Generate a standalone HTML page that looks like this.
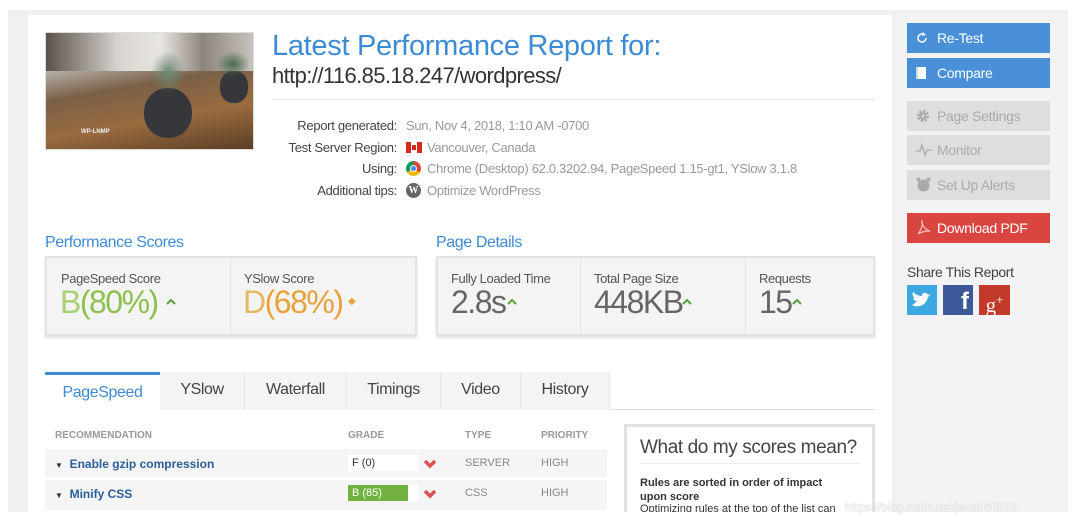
<!DOCTYPE html>
<html><head><meta charset="utf-8"><style>
*{margin:0;padding:0;box-sizing:border-box}
body{width:1080px;height:524px;background:#fff;font-family:"Liberation Sans",sans-serif;position:relative;overflow:hidden;color:#444}
.a{position:absolute;white-space:nowrap}
.frame{left:8px;top:10px;width:1060px;height:504px;background:#f0f0f0}
.main{left:28px;top:15px;width:864px;height:498px;background:#fff}
.side{left:896px;top:15px;width:172px;height:498px;background:#f3f3f3}
.btn{position:absolute;left:907px;width:143px;height:30px;color:#fff;font-size:14px;line-height:30px;padding-left:30px;letter-spacing:-.3px}
.blue{background:#4a90d9}
.grey{background:#dedede;color:#aaa}
.red{background:#d9463f}
.ic{position:absolute;left:9px;top:8px}
.lbl{font-size:13px;color:#444;text-align:right;width:120px;left:277px;letter-spacing:-.3px}
.val{font-size:13px;color:#999;left:427px;letter-spacing:-.3px}
.sec{font-size:16px;color:#3d8bd5;letter-spacing:-.4px}
.box{background:#f4f4f4;border:2px solid #e2e2e2;box-shadow:0 2px 3px rgba(0,0,0,.12)}
.cl{font-size:13px;color:#555;letter-spacing:-.4px}
.big{font-size:32px;letter-spacing:-1.5px;top:284px;font-weight:300;-webkit-text-stroke:0}
.tab{top:372px;height:38px;font-size:16px;color:#444;line-height:36px;text-align:center;background:#f4f4f4;border-right:1px solid #e6e6e6;letter-spacing:-.4px}
.th{font-size:10px;color:#999;font-weight:bold;top:430px}
.row{left:45px;width:562px;height:28px;background:#f5f5f5}
.rl{font-size:12px;font-weight:bold;color:#2a5f9a}
.cell{font-size:11px;color:#888}
</style></head><body>
<div class="a frame"></div>
<div class="a main"></div>
<div class="a side"></div>
<div class="a" style="left:45px;top:32px;width:209px;height:118px;border:1px solid #ddd;background:linear-gradient(170deg,#7d766f 0%,#b6b0a8 25%,#7a6048 45%,#9a6b3f 70%,#5a3e25 100%);overflow:hidden">
<div class="a" style="left:0;top:0;width:209px;height:38px;background:linear-gradient(90deg,#5a524a,#d8d5d0 35%,#e8e6e2 55%,#8c857c 75%,#c9c6c0)"></div>
<div class="a" style="left:98px;top:55px;width:48px;height:50px;border-radius:48%;background:#35373b"></div>
<div class="a" style="left:104px;top:18px;width:36px;height:42px;background:radial-gradient(#6d8a74,transparent 70%)"></div>
<div class="a" style="left:174px;top:38px;width:28px;height:32px;border-radius:45%;background:#35373b"></div>
<div class="a" style="left:170px;top:18px;width:34px;height:26px;background:radial-gradient(#4a6a50,transparent 70%)"></div>
<div class="a" style="left:35px;top:96px;font-size:6px;color:#eee;font-weight:bold">WP-LNMP</div>
</div>
<div class="a" style="left:272px;top:30px;font-size:29px;color:#3d8bd5;letter-spacing:-.3px">Latest Performance Report for:</div>
<div class="a" style="left:272px;top:63px;font-size:22px;color:#333;letter-spacing:-.6px">http://116.85.18.247/wordpress/</div>
<div class="a" style="left:272px;top:99px;width:603px;height:1px;background:#e6e6e6"></div>
<div class="a lbl" style="top:118px">Report generated:</div><div class="a val" style="left:406px;top:118px">Sun, Nov 4, 2018, 1:10 AM -0700</div>
<div class="a lbl" style="top:140px">Test Server Region:</div>
<div class="a" style="left:406px;top:142px;width:16px;height:11px;background:linear-gradient(90deg,#d52b1e 30%,#fff 30%,#fff 70%,#d52b1e 70%)"><div class="a" style="left:6px;top:3px;width:4px;height:5px;background:#d52b1e"></div></div>
<div class="a val" style="top:140px">Vancouver, Canada</div>
<div class="a lbl" style="top:161px">Using:</div>
<div class="a" style="left:406px;top:161px;width:15px;height:15px;border-radius:50%;background:conic-gradient(#db4437 0 120deg,#f4b400 120deg 240deg,#0f9d58 240deg)"><div class="a" style="left:4px;top:4px;width:7px;height:7px;border-radius:50%;background:#4285f4;border:1px solid #fff"></div></div>
<div class="a val" style="top:161px">Chrome (Desktop) 62.0.3202.94, PageSpeed 1.15-gt1, YSlow 3.1.8</div>
<div class="a lbl" style="top:183px">Additional tips:</div>
<div class="a" style="left:406px;top:183px;width:15px;height:15px;border-radius:50%;background:#666;color:#fff;font-size:10px;font-weight:bold;text-align:center;line-height:15px;font-family:'Liberation Serif',serif">W</div>
<div class="a val" style="top:183px">Optimize WordPress</div>

<div class="a sec" style="left:45px;top:234px">Performance Scores</div>
<div class="a sec" style="left:436px;top:234px">Page Details</div>
<div class="a box" style="left:45px;top:256px;width:372px;height:80px"></div>
<div class="a" style="left:230px;top:258px;width:1px;height:76px;background:#e2e2e2"></div>
<div class="a box" style="left:436px;top:256px;width:439px;height:80px"></div>
<div class="a" style="left:580px;top:258px;width:1px;height:76px;background:#e2e2e2"></div>
<div class="a" style="left:745px;top:258px;width:1px;height:76px;background:#e2e2e2"></div>
<div class="a cl" style="left:61px;top:271px">PageSpeed Score</div>
<div class="a big" style="left:60px;color:#8cc04f"><span style="color:#a6d074">B</span>(80%)</div>
<svg class="a" style="left:166px;top:298px" width="10" height="8"><path d="M1 6L5 2L9 6" stroke="#5aa03c" stroke-width="2" fill="none"/></svg>
<div class="a cl" style="left:244px;top:271px">YSlow Score</div>
<div class="a big" style="left:243px;color:#e9a23b"><span style="color:#e4b860">D</span>(68%)</div>
<div class="a" style="left:348px;top:296px;color:#e9a23b;font-size:10px">◆</div>
<div class="a cl" style="left:451px;top:271px">Fully Loaded Time</div>
<div class="a big" style="left:451px;color:#666">2.8s</div>
<svg class="a" style="left:507px;top:298px" width="10" height="8"><path d="M1 6L5 2L9 6" stroke="#5aa03c" stroke-width="2" fill="none"/></svg>
<div class="a cl" style="left:594px;top:271px">Total Page Size</div>
<div class="a big" style="left:594px;color:#666">448KB</div>
<svg class="a" style="left:682px;top:298px" width="10" height="8"><path d="M1 6L5 2L9 6" stroke="#5aa03c" stroke-width="2" fill="none"/></svg>
<div class="a cl" style="left:759px;top:271px">Requests</div>
<div class="a big" style="left:759px;color:#666">15</div>
<svg class="a" style="left:792px;top:298px" width="10" height="8"><path d="M1 6L5 2L9 6" stroke="#5aa03c" stroke-width="2" fill="none"/></svg>

<div class="a" style="left:45px;top:409px;width:830px;height:1px;background:#e2e2e2"></div>
<div class="a tab" style="left:45px;width:115px;background:#fff;color:#3d8bd5;border-top:3px solid #3d8bd5;border-right:none">PageSpeed</div>
<div class="a tab" style="left:160px;width:85px">YSlow</div>
<div class="a tab" style="left:245px;width:102px">Waterfall</div>
<div class="a tab" style="left:347px;width:94px">Timings</div>
<div class="a tab" style="left:441px;width:80px">Video</div>
<div class="a tab" style="left:521px;width:89px">History</div>

<div class="a th" style="left:55px">RECOMMENDATION</div>
<div class="a th" style="left:348px">GRADE</div>
<div class="a th" style="left:465px">TYPE</div>
<div class="a th" style="left:541px">PRIORITY</div>
<div class="a row" style="top:449px"></div>
<div class="a row" style="top:480px;height:30px"></div>
<div class="a rl" style="left:55px;top:457px"><span style="font-size:8px;color:#333">▼</span>&nbsp; Enable gzip compression</div>
<div class="a" style="left:348px;top:455px;width:70px;height:16px;background:#fff"></div>
<div class="a cell" style="left:352px;top:457px;color:#333">F (0)</div>
<svg class="a" style="left:423px;top:459px" width="14" height="10"><path d="M2 2L7 7L12 2" stroke="#d9534f" stroke-width="3.5" fill="none"/></svg>
<div class="a cell" style="left:465px;top:457px">SERVER</div><div class="a cell" style="left:541px;top:457px">HIGH</div>
<div class="a rl" style="left:55px;top:487px"><span style="font-size:8px;color:#333">▼</span>&nbsp; Minify CSS</div>
<div class="a" style="left:348px;top:485px;width:70px;height:16px;background:#fff"></div>
<div class="a" style="left:348px;top:485px;width:60px;height:16px;background:#72b240"></div>
<div class="a cell" style="left:352px;top:487px;color:#fff">B (85)</div>
<svg class="a" style="left:423px;top:489px" width="14" height="10"><path d="M2 2L7 7L12 2" stroke="#d9534f" stroke-width="3.5" fill="none"/></svg>
<div class="a cell" style="left:465px;top:487px">CSS</div><div class="a cell" style="left:541px;top:487px">HIGH</div>

<div class="a" style="left:624px;top:424px;width:251px;height:100px;border:3px solid #e2e2e2;background:#fff"></div>
<div class="a" style="left:640px;top:437px;font-size:19px;color:#444;letter-spacing:-.4px">What do my scores mean?</div>
<div class="a" style="left:640px;top:463px;width:220px;height:1px;background:#eee"></div>
<div class="a" style="left:640px;top:476px;font-size:11px;font-weight:bold;color:#333;line-height:14px;white-space:normal;width:210px">Rules are sorted in order of impact upon score</div>
<div class="a" style="left:640px;top:503px;font-size:11px;color:#333">Optimizing rules at the top of the list can</div>
<div class="a" style="left:0;top:512px;width:1080px;height:12px;background:#fff"></div>
<div class="a" style="left:845px;top:500px;font-size:12px;color:#fff;text-shadow:0 0 1px #999">https://blog.csdn.net/java060515</div>

<div class="btn blue" style="top:23px"><svg class="ic" style="top:9px" width="12" height="12"><path d="M10 6A4 4 0 1 1 8 2.5" stroke="#fff" stroke-width="1.5" fill="none"/><path d="M7 0L10 3L6 4Z" fill="#fff"/></svg>Re-Test</div>
<div class="btn blue" style="top:58px"><span class="ic" style="top:9px;width:10px;height:12px;background:#fff;border-left:2px solid #cde"></span>Compare</div>
<div class="btn grey" style="top:101px"><svg class="ic" style="top:8px" width="14" height="14"><circle cx="7" cy="7" r="4.5" fill="none" stroke="#aaa" stroke-width="3" stroke-dasharray="2.2 1.3"/><circle cx="7" cy="7" r="3.5" fill="#aaa"/><circle cx="7" cy="7" r="1.5" fill="#dedede"/></svg>Page Settings</div>
<div class="btn grey" style="top:135px"><svg class="ic" style="top:8px" width="16" height="14"><path d="M0 8H4L6 2L9 12L11 7H16" stroke="#aaa" stroke-width="1.3" fill="none"/></svg>Monitor</div>
<div class="btn grey" style="top:170px"><svg class="ic" style="top:7px" width="15" height="15"><circle cx="7.5" cy="8.5" r="6" fill="#aaa"/><circle cx="2.5" cy="2.5" r="2" fill="#aaa"/><circle cx="12.5" cy="2.5" r="2" fill="#aaa"/></svg>Set Up Alerts</div>
<div class="btn red" style="top:213px"><svg class="ic" style="top:7px" width="16" height="16"><path d="M2 14C5 10 7 5 6 1C5 4 9 10 14 11C10 11 5 12 2 14Z" stroke="#f5c0bd" stroke-width="1.2" fill="none"/></svg>Download PDF</div>
<div class="a" style="left:907px;top:264px;font-size:14px;color:#444;letter-spacing:-.4px">Share This Report</div>
<div class="a" style="left:907px;top:285px;width:30px;height:30px;background:#3ba9e0"><svg width="30" height="30"><path d="M5 20C11 23 19 21 21 12L24 9L21 10C20 7 16 7 15 10V11C11 11 8 9 6 7C5 10 6 12 8 13L6 13C7 15 8 16 10 16C8 18 7 19 5 20Z" fill="#fff"/></svg></div>
<div class="a" style="left:943px;top:285px;width:30px;height:30px;background:#3b5998;color:#fff;font-size:24px;font-weight:bold;text-align:right;padding-right:4px;line-height:34px">f</div>
<div class="a" style="left:979px;top:285px;width:31px;height:30px;background:#c1392b;color:#fff;font-size:21px;font-family:'Liberation Serif',serif;text-align:center;line-height:30px">g<sup style="font-size:13px">+</sup></div>
</body></html>
